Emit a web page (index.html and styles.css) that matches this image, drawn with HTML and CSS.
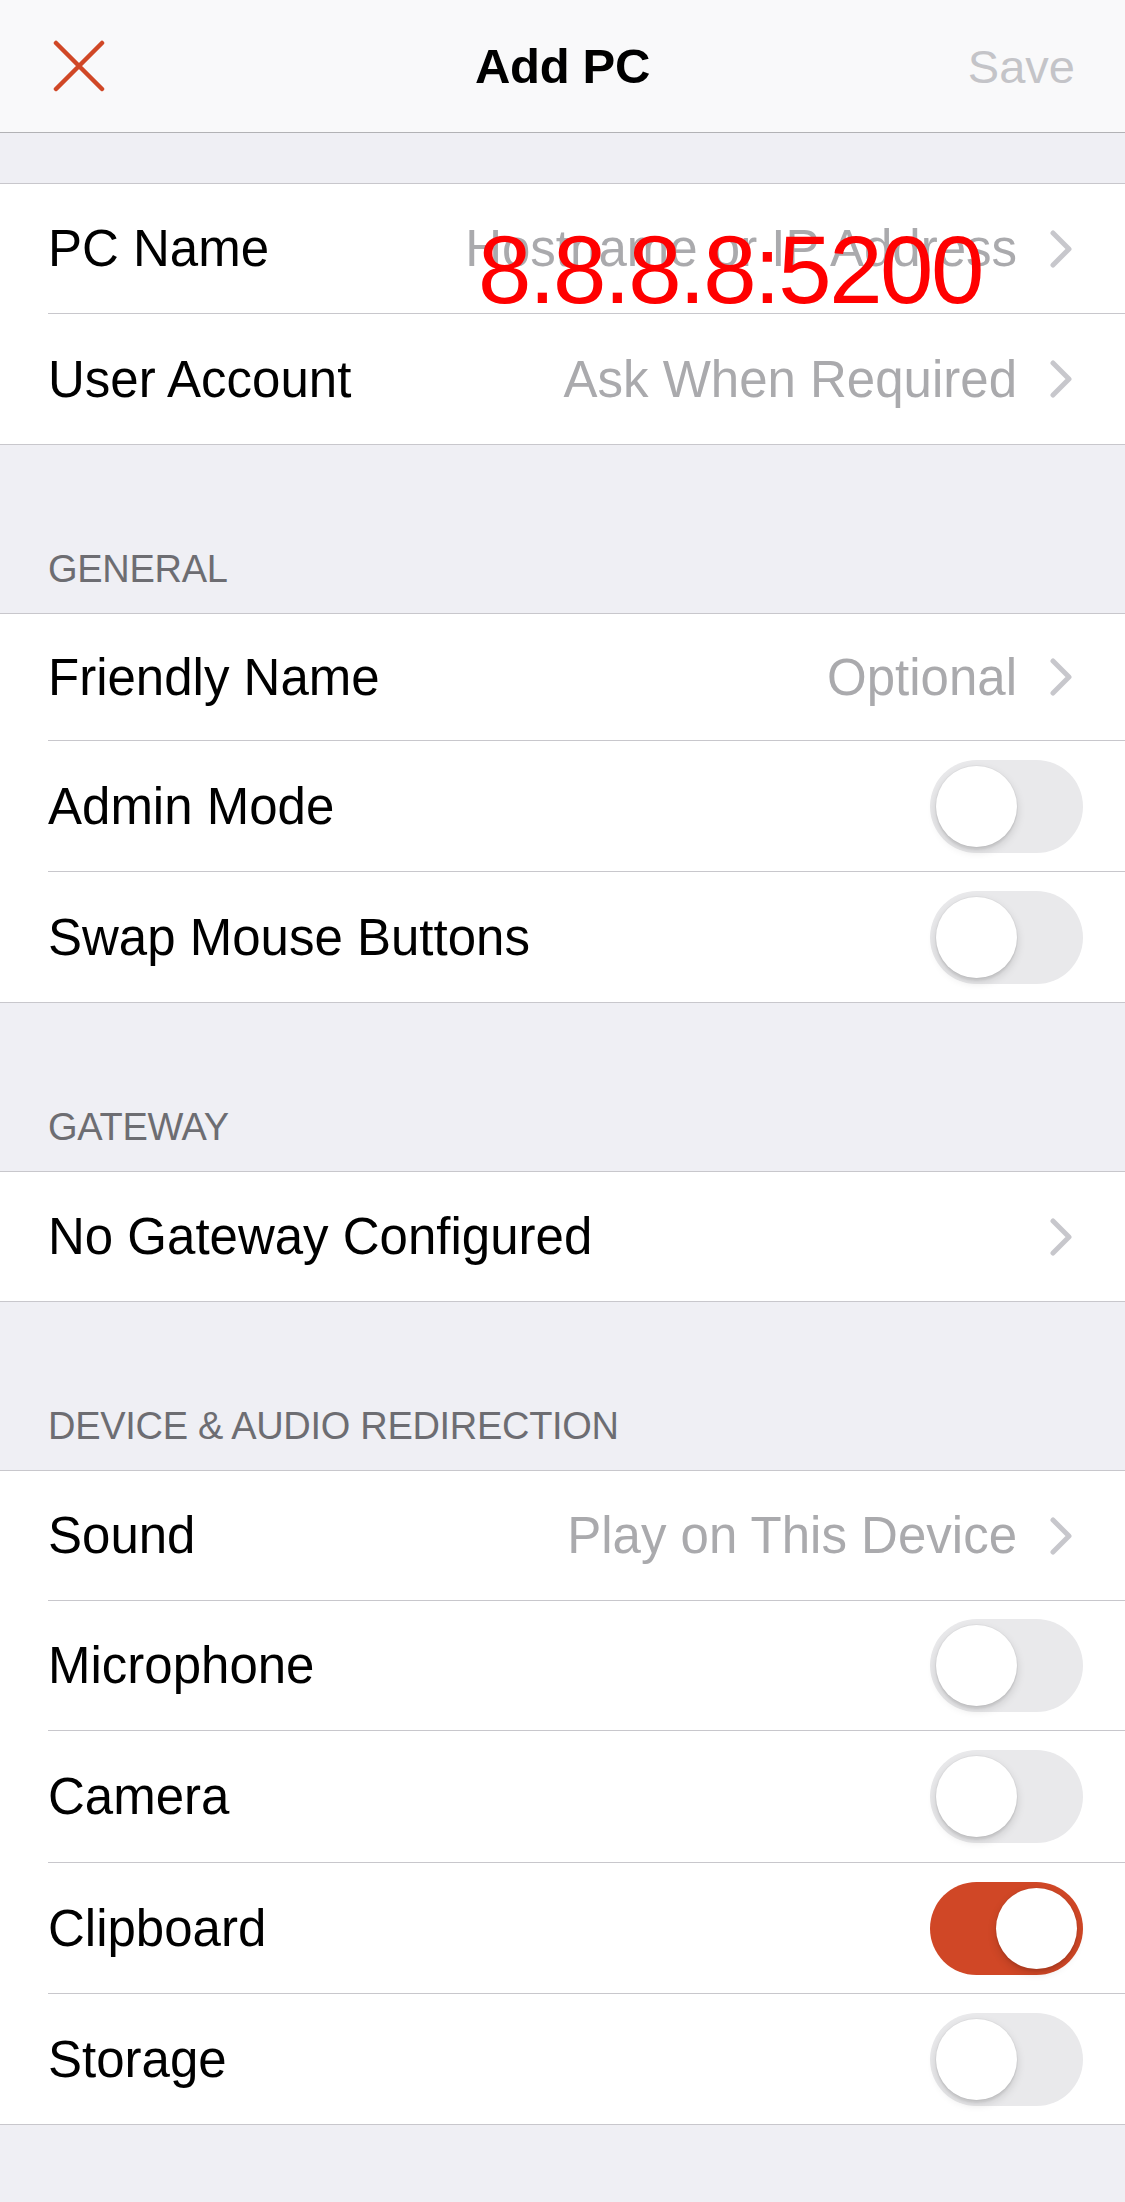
FILE: index.html
```html
<!DOCTYPE html>
<html lang="en">
<head>
<meta charset="utf-8">
<title>Add PC</title>
<link rel="stylesheet" href="styles.css">
</head>
<body>
<div class="screen">
  <header class="navbar">
    <div class="nav-left">
      <svg class="icon-close" width="52" height="52" viewBox="0 0 52 52" aria-label="Close">
        <path d="M3 3 L49 49 M49 3 L3 49" fill="none" stroke="#d04726" stroke-width="4.5" stroke-linecap="round"/>
      </svg>
    </div>
    <h1 class="nav-title">Add PC</h1>
    <div class="nav-right"><span class="nav-save">Save</span></div>
  </header>

  <div class="spacer-top"></div>

  <section class="group">
    <div class="row row-pc">
      <div class="row-inner">
        <span class="label">PC Name</span>
        <span class="value">Hostname or IP Address</span>
        <svg class="chevron" width="24" height="38" viewBox="0 0 24 38"><path d="M4 3 L20 19 L4 35" fill="none" stroke="#c7c7cc" stroke-width="5" stroke-linecap="round" stroke-linejoin="round"/></svg>
      </div>
      <span class="overlay-ip">8.8.8.8:5200</span>
    </div>
    <div class="row">
      <div class="row-inner">
        <span class="label">User Account</span>
        <span class="value">Ask When Required</span>
        <svg class="chevron" width="24" height="38" viewBox="0 0 24 38"><path d="M4 3 L20 19 L4 35" fill="none" stroke="#c7c7cc" stroke-width="5" stroke-linecap="round" stroke-linejoin="round"/></svg>
      </div>
    </div>
  </section>

  <div class="section-header"><span>GENERAL</span></div>
  <section class="group">
    <div class="row">
      <div class="row-inner short">
        <span class="label">Friendly Name</span>
        <span class="value">Optional</span>
        <svg class="chevron" width="24" height="38" viewBox="0 0 24 38"><path d="M4 3 L20 19 L4 35" fill="none" stroke="#c7c7cc" stroke-width="5" stroke-linecap="round" stroke-linejoin="round"/></svg>
      </div>
    </div>
    <div class="row">
      <div class="row-inner tall">
        <span class="label">Admin Mode</span>
        <span class="switch"><span class="knob"></span></span>
      </div>
    </div>
    <div class="row">
      <div class="row-inner">
        <span class="label">Swap Mouse Buttons</span>
        <span class="switch"><span class="knob"></span></span>
      </div>
    </div>
  </section>

  <div class="section-header"><span>GATEWAY</span></div>
  <section class="group">
    <div class="row">
      <div class="row-inner gw">
        <span class="label">No Gateway Configured</span>
        <svg class="chevron push" width="24" height="38" viewBox="0 0 24 38"><path d="M4 3 L20 19 L4 35" fill="none" stroke="#c7c7cc" stroke-width="5" stroke-linecap="round" stroke-linejoin="round"/></svg>
      </div>
    </div>
  </section>

  <div class="section-header"><span>DEVICE &amp; AUDIO REDIRECTION</span></div>
  <section class="group">
    <div class="row">
      <div class="row-inner">
        <span class="label">Sound</span>
        <span class="value">Play on This Device</span>
        <svg class="chevron" width="24" height="38" viewBox="0 0 24 38"><path d="M4 3 L20 19 L4 35" fill="none" stroke="#c7c7cc" stroke-width="5" stroke-linecap="round" stroke-linejoin="round"/></svg>
      </div>
    </div>
    <div class="row">
      <div class="row-inner">
        <span class="label">Microphone</span>
        <span class="switch"><span class="knob"></span></span>
      </div>
    </div>
    <div class="row">
      <div class="row-inner taller">
        <span class="label">Camera</span>
        <span class="switch"><span class="knob"></span></span>
      </div>
    </div>
    <div class="row">
      <div class="row-inner tall">
        <span class="label">Clipboard</span>
        <span class="switch on"><span class="knob"></span></span>
      </div>
    </div>
    <div class="row">
      <div class="row-inner">
        <span class="label">Storage</span>
        <span class="switch"><span class="knob"></span></span>
      </div>
    </div>
  </section>
</div>
</body>
</html>
```

FILE: styles.css
```css
html, body {
  margin: 0;
  padding: 0;
  background: #efeff4;
}

.screen {
  width: 1125px;
  min-height: 2202px;
  background: #efeff4;
  font-family: "Liberation Sans", Arial, sans-serif;
  color: #000;
}

.navbar {
  height: 132px;
  background: #f9f9fa;
  border-bottom: 1px solid #b2b2b5;
  display: grid;
  grid-template-columns: 1fr auto 1fr;
  align-items: center;
}

.nav-left {
  justify-self: start;
  padding-left: 53px;
  display: flex;
  align-items: center;
}

.icon-close {
  display: block;
}

.nav-title {
  margin: 0;
  font-size: 49px;
  font-weight: 700;
  letter-spacing: -0.3px;
  line-height: 1;
}

.nav-right {
  justify-self: end;
  padding-right: 50px;
}

.nav-save {
  font-size: 47px;
  color: #c4c4c8;
}

.spacer-top {
  height: 50px;
}

.group {
  background: #fff;
  border-top: 1px solid #c8c7cc;
  border-bottom: 1px solid #c8c7cc;
}

.row {
  position: relative;
  padding-left: 48px;
  background: #fff;
}

.row-inner {
  box-sizing: border-box;
  height: 130px;
  display: flex;
  align-items: center;
  padding-right: 42px;
  border-bottom: 1px solid #c8c7cc;
}

.row:last-child .row-inner {
  border-bottom: none;
}

.row-inner.short { height: 127px; }
.row-inner.tall { height: 131px; }
.row-inner.taller { height: 132px; }
.row-inner.gw { height: 129px; }

.label {
  font-size: 51px;
  white-space: nowrap;
}

.value {
  margin-left: auto;
  margin-right: 32px;
  font-size: 51px;
  color: #aaaaad;
  white-space: nowrap;
}

.chevron {
  display: block;
  margin-right: 10px;
  flex: none;
}

.chevron.push {
  margin-left: auto;
}

.overlay-ip {
  position: absolute;
  left: 478px;
  top: 38px;
  font-family: "Liberation Sans", Arial, sans-serif;
  font-size: 96px;
  line-height: 1;
  letter-spacing: -2.5px;
  color: #ff0000;
  white-space: nowrap;
}

.section-header {
  box-sizing: border-box;
  height: 168px;
  display: flex;
  align-items: flex-end;
  padding: 0 48px 22px;
  font-size: 38px;
  letter-spacing: -0.3px;
  color: #6d6d72;
}

.switch {
  margin-left: auto;
  box-sizing: border-box;
  width: 153px;
  height: 93px;
  border-radius: 47px;
  background: #e9e9eb;
  padding: 6px;
  display: flex;
  justify-content: flex-start;
  flex: none;
}

.switch.on {
  background: #d04726;
  justify-content: flex-end;
}

.knob {
  width: 81px;
  height: 81px;
  border-radius: 50%;
  background: #fff;
  box-shadow: 0 4px 10px rgba(0, 0, 0, 0.14), 0 3px 2px rgba(0, 0, 0, 0.06), 0 0 0 1px rgba(0, 0, 0, 0.03);
}
```
